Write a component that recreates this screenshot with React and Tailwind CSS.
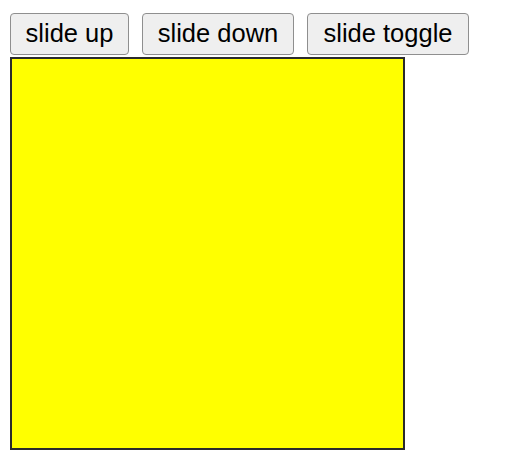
export default function App() {
  const buttons = [
    { label: "slide up", width: "w-[119px]" },
    { label: "slide down", width: "w-[152px]" },
    { label: "slide toggle", width: "w-[162px]" },
  ];

  return (
    <div className="min-h-[460px] bg-white pl-[10px] pt-[13px] font-['Liberation_Sans',Arial,sans-serif]">
      <div className="flex gap-[13px]">
        {buttons.map((b) => (
          <button
            key={b.label}
            type="button"
            className={`${b.width} h-[42px] rounded-[4px] border border-[#8f8f8f] bg-[#efefef] text-center text-[25.5px] leading-none text-black`}
          >
            {b.label}
          </button>
        ))}
      </div>
      <div className="mt-[2px] h-[393px] w-[395px] border-2 border-[#2b2b2b] bg-[#ffff00]" />
    </div>
  );
}
